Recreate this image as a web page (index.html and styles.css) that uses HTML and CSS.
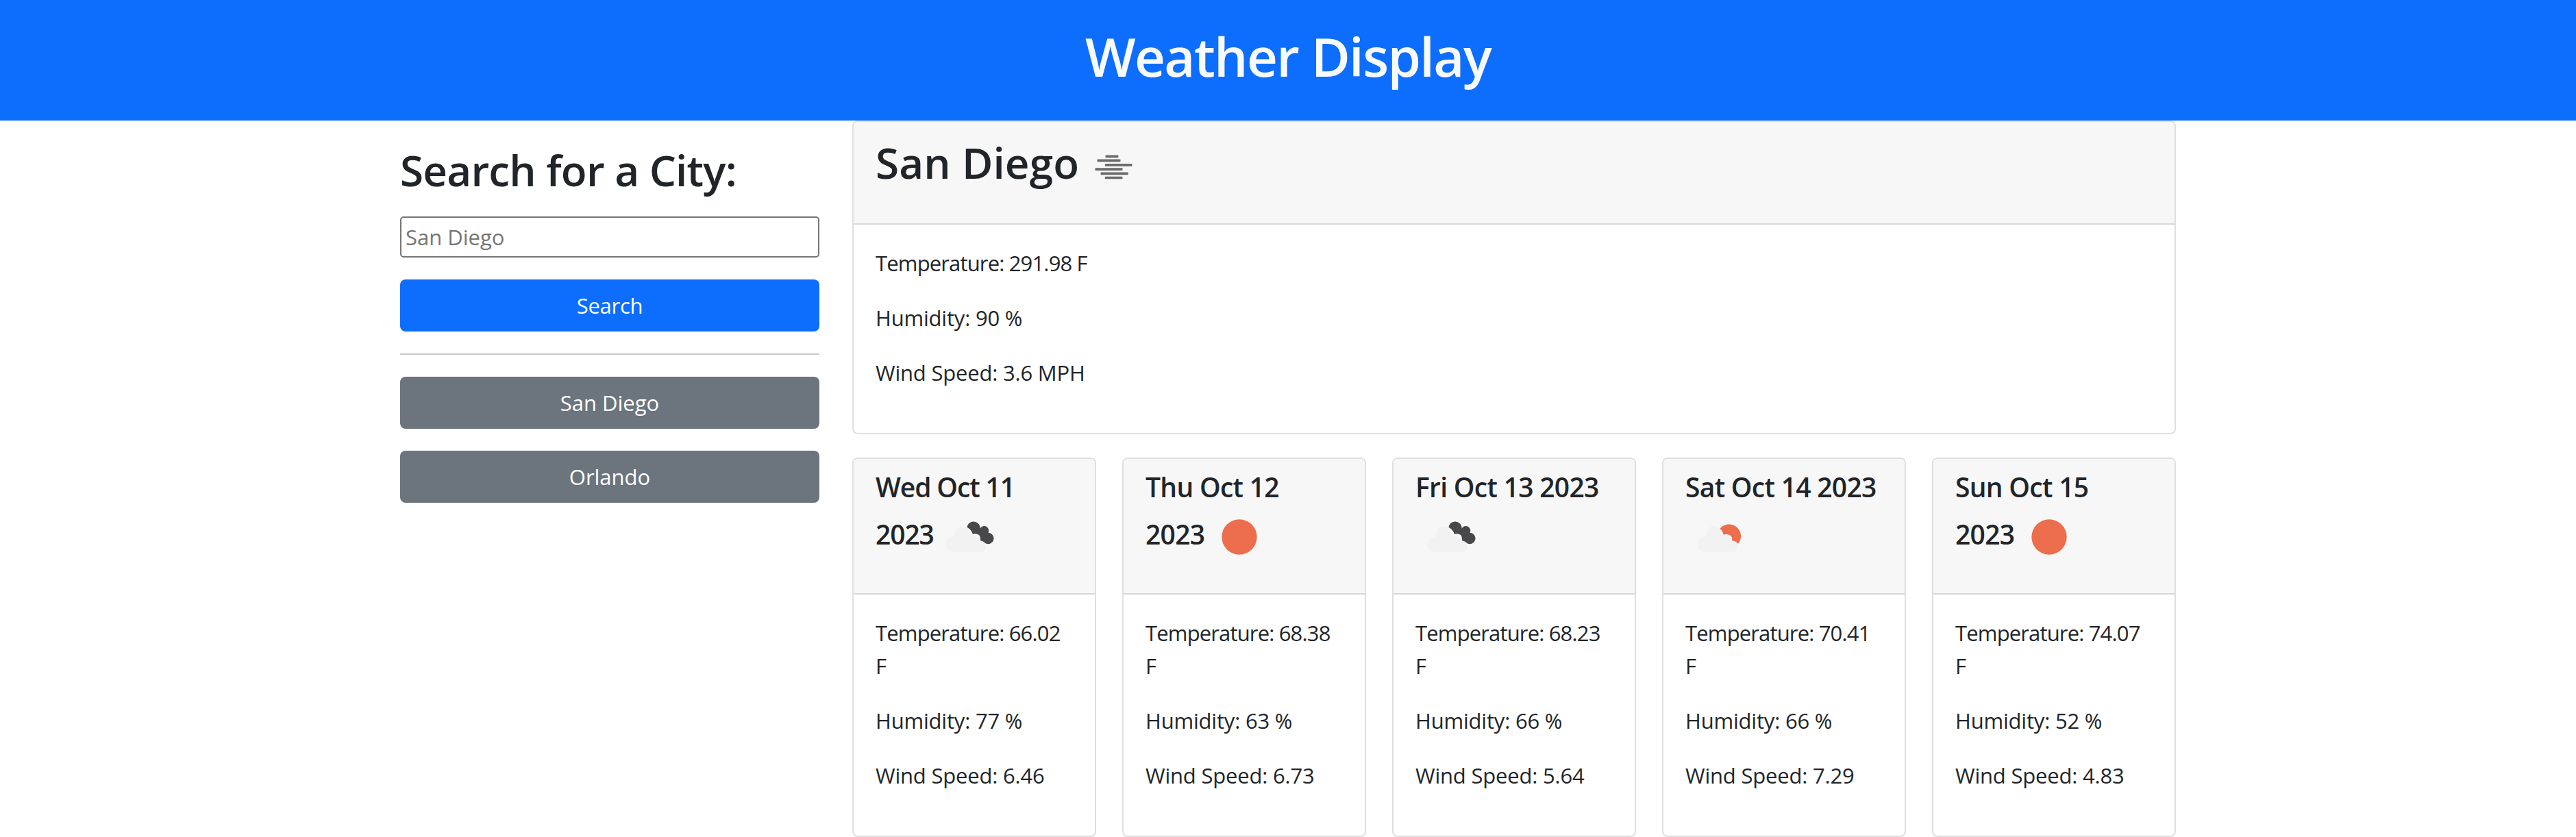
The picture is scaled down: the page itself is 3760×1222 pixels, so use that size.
FILE: index.html
```html
<!DOCTYPE html>
<html lang="en">
<head>
<meta charset="utf-8">
<title>Weather Display</title>
<link rel="stylesheet" href="styles.css">
</head>
<body>
<svg class="defs" aria-hidden="true">
  <symbol id="fog" viewBox="0 0 100 100"><g fill="#6b6b6b" transform="translate(.5 0)"><rect x="38" y="32.500" width="19" height="3.700" rx="1"/><rect x="26" y="38.600" width="34" height="3.700" rx="1"/><rect x="37.300" y="45" width="39.700" height="3.700" rx="1"/><rect x="23" y="51.300" width="40" height="3.700" rx="1"/><rect x="31" y="57.500" width="40.300" height="3.700" rx="1"/><rect x="37.300" y="63.700" width="25.700" height="3.500" rx="1"/></g></symbol>
  <symbol id="cloud" viewBox="0 0 100 100"><g fill="#f2f2f2"><circle cx="26.500" cy="60.500" r="11"/><circle cx="39.500" cy="45.500" r="11"/><circle cx="57" cy="57" r="8"/><circle cx="67" cy="64" r="7.700"/><path d="M26.500 71.500V52L30 45h20l8 9 9 17.500z"/></g></symbol>
  <symbol id="clouds" viewBox="0 0 100 100"><g transform="translate(.8 0)"><use href="#cloud"/><path fill="#48484a" d="M46.500 35.500a9.800 9.800 0 0 1 19-1a9.800 9.800 0 0 1 .3 3a6.300 6.300 0 0 1 11.900 6.300a8.200 8.200 0 1 1-3.500 15.700q-4-4-8.200-4.500q.5-5-1.500-7.700q-4-3-9.500-1.500q-1.500-6-8.500-10.300z"/></g></symbol>
  <symbol id="few" viewBox="0 0 100 100"><g transform="translate(.8 0)"><use href="#cloud"/><path fill="#ec6e4c" d="M48.700 37.700A17 17 0 0 1 75.300 59.700q-4-4-9-4.400q1-5-2.300-7.600q-5-3-10-1q-1-5-5.300-9z"/></g></symbol>
  <symbol id="sun" viewBox="0 0 100 100"><circle cx="50" cy="50" r="25.700" fill="#ec6e4c"/></symbol>
</svg>
<header class="banner"><h1>Weather Display</h1></header>
<main class="container">
  <aside class="search">
    <h2>Search for a City:</h2>
    <input class="city" type="text" placeholder="San Diego">
    <button class="btn primary">Search</button>
    <hr>
    <button class="btn">San Diego</button>
    <button class="btn">Orlando</button>
  </aside>
  <section class="weather">
    <article class="card current">
      <div class="card-header"><h2>San Diego<svg class="icon"><use href="#fog"/></svg></h2></div>
      <div class="card-body"><p class="temp">Temperature: 291.98 F</p><p>Humidity: 90 %</p><p>Wind Speed: 3.6 MPH</p></div>
    </article>
    <div class="forecast">
      <article class="card">
        <div class="card-header"><h3 class="wed">Wed Oct 11 2023<svg class="icon"><use href="#clouds"/></svg></h3></div>
        <div class="card-body"><p class="temp">Temperature: 66.02 F</p><p>Humidity: 77 %</p><p>Wind Speed: 6.46</p></div>
      </article>
      <article class="card">
        <div class="card-header"><h3>Thu Oct 12 2023<svg class="icon"><use href="#sun"/></svg></h3></div>
        <div class="card-body"><p class="temp">Temperature: 68.38 F</p><p>Humidity: 63 %</p><p>Wind Speed: 6.73</p></div>
      </article>
      <article class="card">
        <div class="card-header"><h3>Fri Oct 13 2023<svg class="icon"><use href="#clouds"/></svg></h3></div>
        <div class="card-body"><p class="temp">Temperature: 68.23 F</p><p>Humidity: 66 %</p><p>Wind Speed: 5.64</p></div>
      </article>
      <article class="card">
        <div class="card-header"><h3>Sat Oct 14 2023<svg class="icon"><use href="#few"/></svg></h3></div>
        <div class="card-body"><p class="temp">Temperature: 70.41 F</p><p>Humidity: 66 %</p><p>Wind Speed: 7.29</p></div>
      </article>
      <article class="card">
        <div class="card-header"><h3>Sun Oct 15 2023<svg class="icon"><use href="#sun"/></svg></h3></div>
        <div class="card-body"><p class="temp">Temperature: 74.07 F</p><p>Humidity: 52 %</p><p>Wind Speed: 4.83</p></div>
      </article>
    </div>
  </section>
</main>
</body>
</html>
```
FILE: styles.css
```css
* { box-sizing: border-box; }
body { margin: 0; background: #fff; color: #212529; font: 31px/48px "Open Sans", "Noto Sans", sans-serif; letter-spacing: -0.2px; }
h1, h2, h3, p { margin: 0; }
h1, h2, h3 { font-weight: 600; }
.defs { display: none; }
.banner { height: 176px; padding: 31px 32px; background: #0d6efd; color: #f8f9fa; text-align: center; }
.banner h1 { font-size: 78px; line-height: 102px; letter-spacing: -1.7px; }
.container { display: flex; width: 2640px; margin: 0 auto; }
.search { display: flex; flex-direction: column; width: 660px; padding: 32px 24px 0; }
.search h2, .current h2 { font-size: 62px; line-height: 77px; }
.search h2 { margin: 2px 0 29px; letter-spacing: -0.8px; }
.current h2 { letter-spacing: 0.1px; }
.city { height: 60px; margin: 0 0 32px; padding: 2px 6px; border: 2px solid #767676; border-radius: 5px; background: #fff; font: inherit; letter-spacing: 0; }
.city::placeholder { color: #757575; opacity: 1; }
.btn { height: 76px; margin: 0 0 32px; padding: 12px 24px; border: 0; border-radius: 8px; background: #6c757d; color: #fff; font: inherit; letter-spacing: 0; }
.primary { background: #0d6efd; letter-spacing: -0.3px; }
hr { width: 100%; height: 2px; margin: 0 0 32px; border: 0; background: #c8c8c8; }
.weather { width: 1980px; padding: 0 24px; }
.card { border: 2px solid #dfdfdf; border-radius: 8px; background: #fff; overflow: hidden; }
.card-header { padding: 16px 32px 32px; border-bottom: 2px solid #d8d8d8; background: #f7f7f7; }
.current .card-header { height: 150px; }
.current { height: 458px; }
.card-body { padding: 32px; }
.card-body p { margin-bottom: 32px; }
.card-body .temp { letter-spacing: -0.85px; }
.icon { width: 100px; height: 100px; vertical-align: middle; }
.forecast { display: flex; justify-content: space-between; margin-top: 34px; }
.forecast .card { width: 356px; height: 554px; }
.forecast .card-header { height: 198px; padding-top: 17px; }
.forecast h3 { font-size: 39px; line-height: 48px; letter-spacing: -0.7px; }
.forecast .icon { margin: -1px 0 0 1px; }
.forecast .wed { letter-spacing: -1.1px; }
```
